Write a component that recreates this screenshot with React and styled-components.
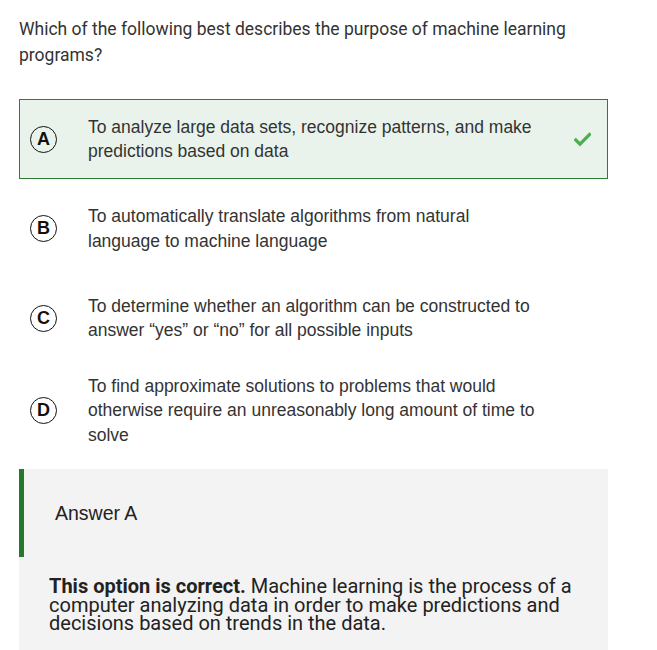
import React from "react";
import styled, { createGlobalStyle } from "styled-components";

const Global = createGlobalStyle`
  html, body { margin: 0; padding: 0; background: #fff; }
  body { font-family: Roboto, "Liberation Sans", sans-serif; }
`;

const Page = styled.div`
  padding: 16px 49px 0 19px;
  width: 589px;
`;

const Question = styled.p`
  margin: 0 0 31px;
  font-family: Roboto, sans-serif;
  font-size: 17.5px;
  line-height: 26px;
  color: #333;
`;

const Options = styled.div`
  display: flex;
  flex-direction: column;
  gap: 9.5px;
`;

const Option = styled.div`
  display: flex;
  align-items: center;
  box-sizing: border-box;
  min-height: 80px;
  padding: 5px 16px 5px 10px;
  border: 1px solid ${(p) => (p.$correct ? "#2e7d32" : "transparent")};
  background: ${(p) => (p.$correct ? "#e9f3eb" : "transparent")};
`;

const Letter = styled.span`
  flex: none;
  box-sizing: border-box;
  width: 27px;
  height: 27px;
  margin-right: 31px;
  border: 1.5px solid #111;
  border-radius: 50%;
  display: flex;
  align-items: center;
  justify-content: center;
  font-family: "Liberation Sans", Arial, sans-serif;
  font-weight: 700;
  font-size: 18px;
  color: #111;
`;

const OptionText = styled.span`
  flex: 1;
  font-family: "Liberation Sans", Arial, sans-serif;
  font-size: 17.5px;
  line-height: 24.5px;
  color: #333;
`;

const CheckSlot = styled.span`
  flex: none;
  width: 52px;
  display: flex;
  justify-content: flex-end;
`;

const Feedback = styled.section`
  margin-top: 16px;
  background: #f3f3f3;
  padding-bottom: 30px;
`;

const FeedbackHead = styled.div`
  height: 88px;
  border-left: 5px solid #237a2c;
  padding-left: 31px;
  display: flex;
  align-items: center;
  font-family: "Liberation Sans", Arial, sans-serif;
  font-size: 19.5px;
  color: #222;
`;

const FeedbackBody = styled.p`
  margin: 0;
  padding: 20px 36px 0 30px;
  font-family: Roboto, sans-serif;
  font-size: 20px;
  line-height: 18.5px;
  color: #222;
  b { font-weight: 700; }
`;

const Check = () => (
  <svg width="17" height="15" viewBox="0 0 17 15">
    <path d="M1.8 8 L6 12.2 L15.5 2.5" fill="none" stroke="#4caf50" strokeWidth="3.2" strokeLinecap="square" />
  </svg>
);

const options = [
  { l: "A", t: "To analyze large data sets, recognize patterns, and make predictions based on data", c: true },
  { l: "B", t: "To automatically translate algorithms from natural language to machine language" },
  { l: "C", t: "To determine whether an algorithm can be constructed to answer \u201cyes\u201d or \u201cno\u201d for all possible inputs" },
  { l: "D", t: "To find approximate solutions to problems that would otherwise require an unreasonably long amount of time to solve" },
];

export default function App() {
  return (
    <Page>
      <Global />
      <Question>Which of the following best describes the purpose of machine learning programs?</Question>
      <Options>
        {options.map((o) => (
          <Option key={o.l} $correct={o.c}>
            <Letter>{o.l}</Letter>
            <OptionText>{o.t}</OptionText>
            <CheckSlot>{o.c && <Check />}</CheckSlot>
          </Option>
        ))}
      </Options>
      <Feedback>
        <FeedbackHead>Answer A</FeedbackHead>
        <FeedbackBody>
          <b>This option is correct.</b> Machine learning is the process of a computer analyzing data in order to make predictions and decisions based on trends in the data.
        </FeedbackBody>
      </Feedback>
    </Page>
  );
}
